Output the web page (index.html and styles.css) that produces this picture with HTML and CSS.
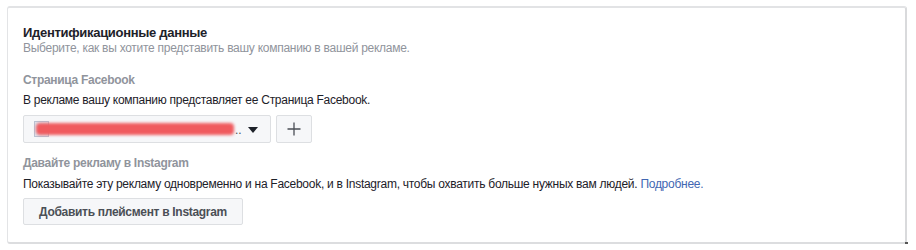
FILE: index.html
```html
<!DOCTYPE html>
<html lang="ru">
<head>
<meta charset="utf-8">
<title>Идентификационные данные</title>
<link rel="stylesheet" href="styles.css">
</head>
<body>
<div class="card">
  <h2 class="title">Идентификационные данные</h2>
  <p class="subtitle">Выберите, как вы хотите представить вашу компанию в вашей рекламе.</p>

  <div class="label label-fb">Страница Facebook</div>
  <p class="text">В рекламе вашу компанию представляет ее Страница Facebook.</p>

  <div class="picker-row">
    <div class="picker">
      <span class="thumb"></span>
      <span class="redacted"></span>
      <span class="dots">..</span>
      <span class="caret"></span>
    </div>
    <button class="plus" type="button" aria-label="Добавить">
      <svg width="16" height="16" viewBox="0 0 16 16"><path d="M8 1.5v13M1.5 8h13" stroke="#4b4f56" stroke-width="1.3" fill="none"/></svg>
    </button>
  </div>

  <div class="label label-ig">Давайте рекламу в Instagram</div>
  <p class="text text-ig">Показывайте эту рекламу одновременно и на Facebook, и в Instagram, чтобы охватить больше нужных вам людей. <a class="link" href="#">Подробнее.</a></p>

  <button class="btn" type="button">Добавить плейсмент в Instagram</button>
  <span class="grip"></span>
</div>
</body>
</html>
```

FILE: styles.css
```css
* { box-sizing: border-box; }
body {
  margin: 0;
  background: #ffffff;
  font-family: "Liberation Sans", Arial, sans-serif;
  color: #1d2129;
}
.card {
  position: relative;
  margin: 6px 0 0 7px;
  width: 900px;
  height: 238px;
  border: 1px solid #e3e4e6;
  border-top: 2px solid #e2e3e5;
  border-right: 2px solid #d9dadc;
  border-bottom: 2px solid #dcdddf;
  border-radius: 3px;
  padding: 17px 15px 0 15px;
}
.title {
  margin: 0;
  font-size: 13px;
  line-height: 16px;
  letter-spacing: -0.3px;
  font-weight: bold;
  color: #1d2129;
}
.subtitle {
  margin: 0;
  font-size: 12px;
  line-height: 14px;
  letter-spacing: -0.27px;
  color: #90949c;
}
.label {
  font-size: 12px;
  line-height: 16px;
  letter-spacing: -0.3px;
  font-weight: bold;
  color: #90949c;
}
.label-fb { margin-top: 17px; }
.label-ig { margin-top: 12px; }
.text {
  margin: 4px 0 0 0;
  font-size: 12px;
  line-height: 16px;
  letter-spacing: -0.27px;
  color: #1d2129;
}
.text-ig { margin-top: 5px; }
.link { color: #4267b2; text-decoration: none; }
.picker-row {
  display: flex;
  gap: 5px;
  margin-top: 7px;
  height: 28px;
}
.picker {
  position: relative;
  width: 248px;
  height: 28px;
  border: 1px solid #dddfe2;
  border-radius: 2px;
  background: #f6f7f9;
}
.thumb {
  position: absolute;
  left: 10px;
  top: 5px;
  width: 15px;
  height: 16px;
  border: 1px solid #b9c4d4;
  background: #dfe6ef;
}
.redacted {
  position: absolute;
  left: 12px;
  top: 7px;
  width: 198px;
  height: 12px;
  background: #f05a5e;
  border-radius: 4px;
  filter: blur(1.5px);
}
.dots {
  position: absolute;
  left: 211px;
  top: 6px;
  font-size: 12px;
  line-height: 16px;
  color: #4b4f56;
}
.caret {
  position: absolute;
  left: 224px;
  top: 11px;
  width: 0;
  height: 0;
  border-left: 5px solid transparent;
  border-right: 5px solid transparent;
  border-top: 6px solid #1d2129;
}
.plus {
  width: 36px;
  height: 28px;
  border: 1px solid #dddfe2;
  border-radius: 2px;
  background: #f6f7f9;
  padding: 0;
  display: flex;
  align-items: center;
  justify-content: center;
}
.btn {
  display: block;
  margin-top: 6px;
  height: 27px;
  width: 220px;
  border: 1px solid #dddfe2;
  border-radius: 2px;
  background: #f6f7f9;
  font-family: "Liberation Sans", Arial, sans-serif;
  font-size: 12px;
  letter-spacing: -0.3px;
  font-weight: bold;
  color: #4b4f56;
  padding: 0;
  white-space: nowrap;
  text-align: center;
}
.grip {
  position: absolute;
  right: -3px;
  bottom: -3px;
  width: 3px;
  height: 3px;
  background: #555;
}
```
